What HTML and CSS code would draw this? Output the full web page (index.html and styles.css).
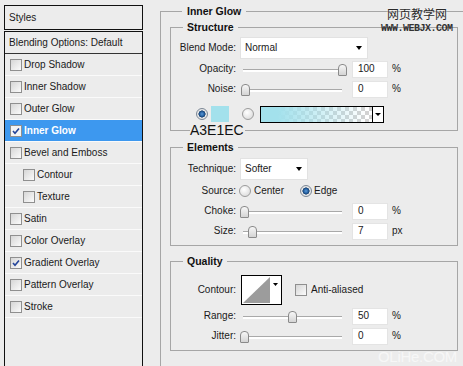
FILE: index.html
```html
<!DOCTYPE html>
<html lang="en">
<head>
  <meta charset="UTF-8">
  <title>Layer Style - Inner Glow</title>
  <link rel="stylesheet" href="styles.css">
</head>
<body>
  <div class="page">
    <aside class="styles">
      <div class="styles-head">Styles</div>
      <ul class="styles-list">
        <li class="blend">Blending Options: Default</li>
        <li><span class="cb"></span>Drop Shadow</li>
        <li><span class="cb"></span>Inner Shadow</li>
        <li><span class="cb"></span>Outer Glow</li>
        <li class="on"><span class="cb checked"><svg viewBox="0 0 10 10"><path d="M2 5l2 2.3L8 2.4"/></svg></span>Inner Glow</li>
        <li><span class="cb"></span>Bevel and Emboss</li>
        <li class="sub"><span class="cb"></span>Contour</li>
        <li class="sub"><span class="cb"></span>Texture</li>
        <li><span class="cb"></span>Satin</li>
        <li><span class="cb"></span>Color Overlay</li>
        <li><span class="cb checked"><svg viewBox="0 0 10 10"><path d="M2 5l2 2.3L8 2.4"/></svg></span>Gradient Overlay</li>
        <li><span class="cb"></span>Pattern Overlay</li>
        <li><span class="cb"></span>Stroke</li>
      </ul>
    </aside>

    <fieldset class="group">
      <legend>Inner Glow</legend>

      <fieldset class="box">
        <legend>Structure</legend>
        <div class="rows structure">
          <div class="row tall">
            <label>Blend Mode:</label>
            <div class="select wide">Normal</div>
          </div>
          <div class="row">
            <label>Opacity:</label>
            <div class="slider"><span class="thumb" style="left: 98px"></span></div>
            <div class="num">100</div><span class="unit">%</span>
          </div>
          <div class="row">
            <label>Noise:</label>
            <div class="slider"><span class="thumb" style="left: 1px"></span></div>
            <div class="num">0</div><span class="unit">%</span>
          </div>
          <div class="row color-row">
            <span class="radio on"></span>
            <span class="swatch"></span>
            <span class="radio second"></span>
            <div class="grad"><div class="grad-bar"></div><div class="grad-drop"></div></div>
            <span class="hex">A3E1EC</span>
          </div>
        </div>
      </fieldset>

      <fieldset class="box">
        <legend>Elements</legend>
        <div class="rows elements">
          <div class="row tall">
            <label>Technique:</label>
            <div class="select narrow">Softer</div>
          </div>
          <div class="row source">
            <label>Source:</label>
            <span class="radio"></span><span class="opt">Center</span>
            <span class="radio on gap"></span><span class="opt">Edge</span>
          </div>
          <div class="row">
            <label>Choke:</label>
            <div class="slider"><span class="thumb" style="left: 0px"></span></div>
            <div class="num">0</div><span class="unit">%</span>
          </div>
          <div class="row">
            <label>Size:</label>
            <div class="slider"><span class="thumb" style="left: 8px"></span></div>
            <div class="num">7</div><span class="unit">px</span>
          </div>
        </div>
      </fieldset>

      <fieldset class="box">
        <legend>Quality</legend>
        <div class="rows quality">
          <div class="row contour-row">
            <label>Contour:</label>
            <svg class="contour" viewBox="0 0 41 30">
              <rect x="0.5" y="0.5" width="40" height="29" fill="#fff" stroke="#000"/>
              <polygon points="2,28 29,2 29,28" fill="#9c9c9c"/>
              <polygon points="32,8 37,8 34.5,11" fill="#000"/>
            </svg>
            <span class="cb aa"></span><span class="opt">Anti-aliased</span>
          </div>
          <div class="row">
            <label>Range:</label>
            <div class="slider"><span class="thumb" style="left: 48px"></span></div>
            <div class="num">50</div><span class="unit">%</span>
          </div>
          <div class="row">
            <label>Jitter:</label>
            <div class="slider"><span class="thumb" style="left: 0px"></span></div>
            <div class="num">0</div><span class="unit">%</span>
          </div>
        </div>
      </fieldset>
    </fieldset>
  </div>

  <div class="wm-cn">网页教学网</div>
  <div class="wm-en">WWW.WEBJX.COM</div>
  <div class="wm-olihe">OLiHe.COM</div>
</body>
</html>
```

FILE: styles.css
```css
* {
  box-sizing: border-box;
}
html, body {
  margin: 0;
  height: 100%;
}
body {
  position: relative;
  overflow: hidden;
  background-color: #ececec;
  font: 10px/12px "Liberation Sans", Arial, sans-serif;
  color: #1a1a1a;
}
.page {
  display: flex;
  align-items: flex-start;
}

/* left list */
.styles {
  flex: none;
  width: 139px;
  margin: 5px 0 0 4px;
}
.styles-head {
  height: 25px;
  border: 1px solid #111;
  padding-left: 4px;
  display: flex;
  align-items: center;
}
.styles-list {
  list-style: none;
  margin: 1px 0 0;
  padding: 0;
  height: 335px;
  border: 1px solid #111;
  border-bottom: 0;
}
.styles-list li {
  height: 22px;
  display: flex;
  align-items: center;
  padding-left: 5px;
  border-bottom: 1px solid #fafafa;
}
.styles-list li.blend {
  padding-left: 4px;
  border-bottom-color: #333;
}
.styles-list li.sub {
  padding-left: 18px;
}
.styles-list li.on {
  background-color: #3d98ef;
  color: #fff;
  font-weight: bold;
}
.cb {
  flex: none;
  width: 12px;
  height: 12px;
  margin-right: 2px;
  border: 1px solid #8f8f8f;
  background: linear-gradient(135deg, #d6d6d6, #fbfbfb);
  display: flex;
}
.cb svg {
  width: 10px;
  height: 10px;
  fill: none;
  stroke: #23449a;
  stroke-width: 1.6;
}
.on .cb {
  background: #f4f4f4;
}

/* right groups */
fieldset {
  margin: 0;
  padding: 0;
  min-width: 0;
  border: 1px solid #a6a6a6;
}
legend {
  margin-left: 12px;
  padding: 0 5px;
  font: bold 10.5px/12px "Liberation Sans", Arial, sans-serif;
  color: #111;
}
.group {
  flex: none;
  width: 303px;
  height: 361px;
  margin: 5px 0 0 17px;
  padding: 4px 0 0 9px;
  border-bottom: 0;
  border-right: 0;
}
.box {
  width: 288px;
  margin-bottom: 10px;
}
.box legend {
  padding: 0 4px;
}
.box + .box + .box {
  margin-top: -1px;
}
.rows {
  display: flex;
  flex-direction: column;
}
.structure {
  padding: 4px 0 7px;
}
.elements {
  padding: 5px 0 4px;
}
.quality {
  padding: 7px 0 4px;
}
.row {
  position: relative;
  height: 20px;
  display: flex;
  align-items: center;
}
.row.tall {
  height: 22px;
}
.row label {
  flex: none;
  width: 65px;
  margin-right: 4px;
  text-align: right;
}
.select {
  height: 22px;
  background-color: #fff;
  border: 1px solid #e2e2e2;
  padding: 0 5px 0 4px;
  display: flex;
  align-items: center;
  justify-content: space-between;
}
.select::after {
  content: "";
  width: 0;
  height: 0;
  border-left: 3.5px solid transparent;
  border-right: 3.5px solid transparent;
  border-top: 4px solid #000;
}
.select.wide {
  width: 128px;
}
.select.narrow {
  width: 68px;
}
.slider {
  position: relative;
  flex: none;
  width: 106px;
  height: 20px;
}
.slider::before {
  content: "";
  position: absolute;
  left: 3px;
  right: 4px;
  top: 10px;
  height: 2px;
  border-top: 1px solid #a9a9a9;
  background-color: #fff;
}
.thumb {
  position: absolute;
  top: 5px;
  width: 9px;
  height: 12px;
  border: 1px solid #8a8a8a;
  border-radius: 4px 4px 1px 1px;
  background: linear-gradient(#f7f7f7, #d4d4d4);
}
.num {
  flex: none;
  width: 36px;
  height: 17px;
  margin-left: 6px;
  padding-left: 5px;
  background-color: #fff;
  border: 1px solid #e4e4e4;
  display: flex;
  align-items: center;
}
.unit {
  margin-left: 4px;
}

/* colour row */
.color-row {
  height: 18px;
  margin-top: 6px;
  padding-left: 25px;
}
.radio {
  flex: none;
  width: 12px;
  height: 12px;
  border-radius: 50%;
  border: 1px solid #9b9b9b;
  background: radial-gradient(circle at 40% 35%, #fff, #d4d4d4);
}
.radio.on {
  border-color: #7c8896;
  background: radial-gradient(circle, #5b9ad6 0, #2a66a8 2px, #16406f 3.3px, #e6e6e6 3.8px);
}
.swatch {
  flex: none;
  width: 18px;
  height: 16px;
  margin-left: 3px;
  background-color: #a3e1ec;
}
.radio.second {
  margin-left: 13px;
}
.grad {
  flex: none;
  display: flex;
  width: 124px;
  height: 17px;
  margin-left: 6px;
  border: 1px solid #000;
}
.grad-bar {
  flex: 1;
  background:
    linear-gradient(to right, #a3e1ec 15%, rgba(163, 225, 236, 0) 95%),
    repeating-conic-gradient(#d2d2d2 0 25%, #fff 0 50%) 0 0 / 8px 8px;
}
.grad-drop {
  width: 11px;
  border-left: 1px solid #000;
  background-color: #fff;
  display: flex;
  align-items: center;
  justify-content: center;
}
.grad-drop::after {
  content: "";
  border-left: 3px solid transparent;
  border-right: 3px solid transparent;
  border-top: 3px solid #000;
}
.hex {
  position: absolute;
  left: 19px;
  top: 17px;
  padding-right: 1px;
  background-color: #ececec;
  font: 14px/16px "Liberation Sans", Arial, sans-serif;
  color: #111;
}

/* elements */
.source {
  height: 21px;
}
.source .radio {
  margin-left: -1px;
}
.opt {
  margin-left: 3px;
}
.source .radio.gap {
  margin-left: 16px;
}
.source .radio.gap + .opt {
  margin-left: 2px;
}

/* quality */
.contour-row {
  height: 32px;
}
.contour {
  flex: none;
  width: 41px;
  height: 30px;
  margin-left: 1px;
}
.cb.aa {
  margin-left: 13px;
  margin-right: 0;
}
.cb.aa + .opt {
  margin-left: 4px;
}

/* watermarks */
.wm-cn {
  position: absolute;
  left: 387px;
  top: 7px;
  font: 12px/14px "Noto Sans CJK SC", sans-serif;
  color: #2a2a2a;
  text-shadow: 0 0 2px #fff;
}
.wm-en {
  position: absolute;
  left: 381px;
  top: 23px;
  font: bold 10px/11px "Liberation Mono", monospace;
  letter-spacing: -0.5px;
  color: #333;
}
.wm-olihe {
  position: absolute;
  left: 378px;
  top: 348px;
  font: 15px/17px "Liberation Sans", Arial, sans-serif;
  letter-spacing: -0.3px;
  color: #f7f7f7;
}
```
